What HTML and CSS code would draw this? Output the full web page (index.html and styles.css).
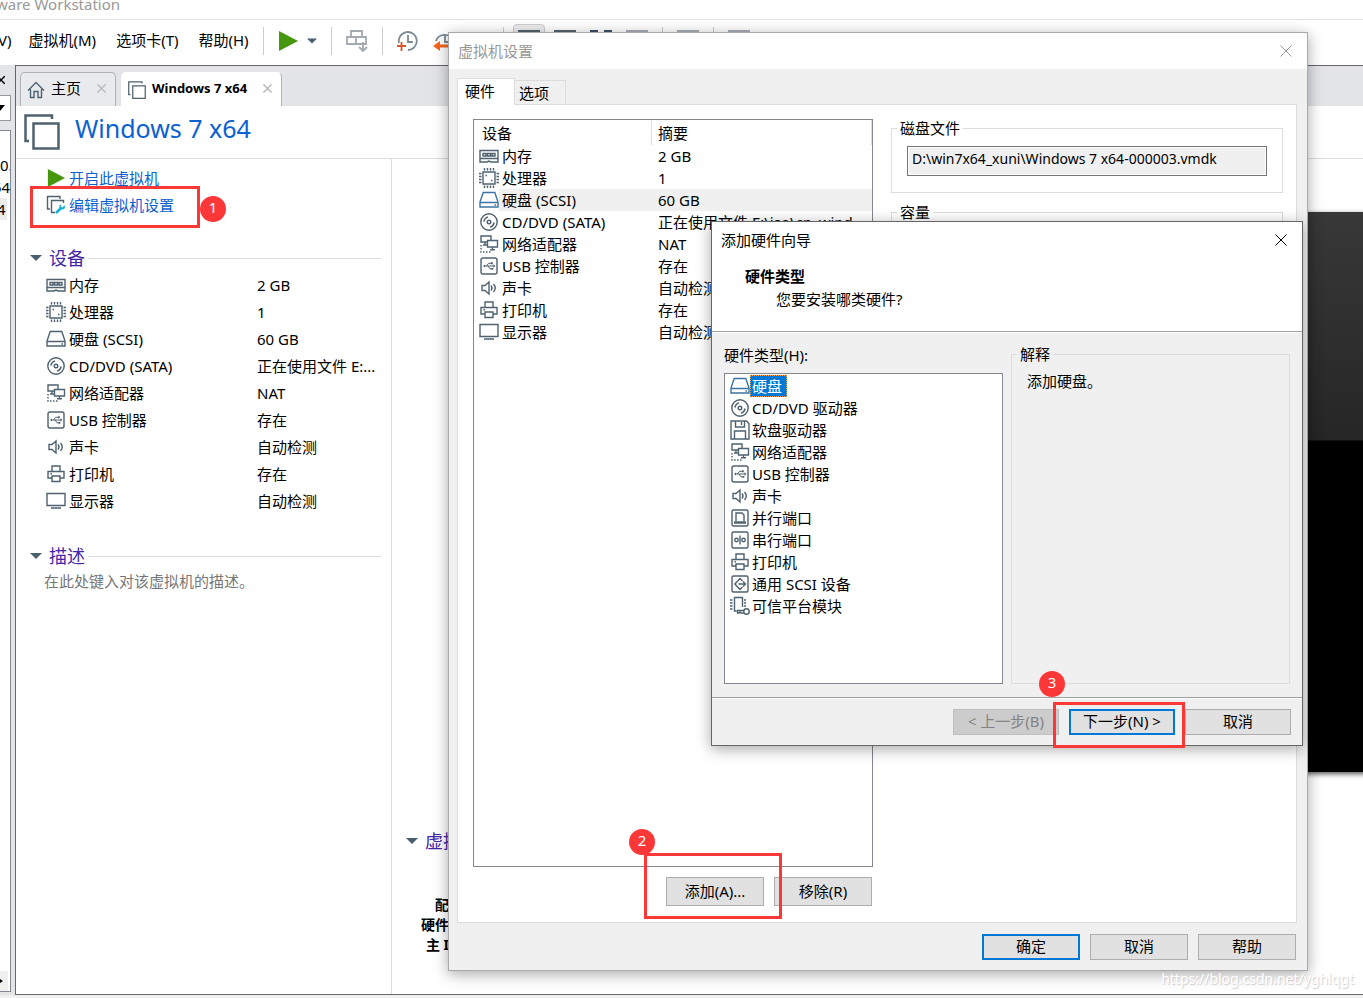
FILE: index.html
```html
<!DOCTYPE html>
<html lang="zh-CN">
<head>
<meta charset="utf-8">
<title>Workstation</title>
<link rel="stylesheet" href="styles.css">
</head>
<body>
<svg class="defs" aria-hidden="true">
  <symbol id="i-mem" viewBox="0 0 20 20"><path d="M1 4.500H19V16H12L10 15L8 16H1Z"/><path d="M1 12.500H19M4 7.500H7V10H4ZM8.500 7.500H11.500V10H8.500ZM13 7.500H16V10H13Z"/></symbol>
  <symbol id="i-cpu" viewBox="0 0 20 20"><path d="M4 4H16V16H4Z"/><path d="M5.500 0V2.500M8.500 0V2.500M11.500 0V2.500M14.500 0V2.500M5.500 17.500V20M8.500 17.500V20M11.500 17.500V20M14.500 17.500V20M0 5.500H2.500M0 8.500H2.500M0 11.500H2.500M0 14.500H2.500M17.500 5.500H20M17.500 8.500H20M17.500 11.500H20M17.500 14.500H20"/><path d="M6.500 7.500H8M12 12.500H13.500"/></symbol>
  <symbol id="i-disk" viewBox="0 0 20 20"><path d="M4.200 2.500H15.800L19 12V17H1V12Z"/><path d="M1 12.500H19M15.500 15H17"/></symbol>
  <symbol id="i-cd" viewBox="0 0 20 20"><circle cx="10" cy="10" r="8.200"/><circle cx="10" cy="10" r="1.800"/><path d="M4.800 9.500Q5.500 6 9 4.800M11 15.200Q14.500 14 15.200 10.500"/></symbol>
  <symbol id="i-net" viewBox="0 0 20 20"><path d="M12 6V2H2V8H8M6 8V11M4 11H8M8.500 6.500H18.500V13H8.500ZM13.500 13V15.500M11 15.700H16"/><path d="M2 11V18H13" stroke-dasharray="1.500 1.500"/></symbol>
  <symbol id="i-usb" viewBox="0 0 20 20"><rect x="2" y="2" width="16" height="16" rx="2"/><path stroke-width="1" d="M5 10H15M7.500 10L9.500 7.300H12M9 10L11 12.800H13"/><path stroke="none" fill="#4f6270" d="M4 10L6 8.500V11.500ZM14.500 8.300L16.500 10L14.500 11.700ZM12 6.300H13.800V8.200H12ZM12.500 11.900H14.300V13.800H12.500Z"/></symbol>
  <symbol id="i-snd" viewBox="0 0 20 20"><path d="M3 7.500H6L10 4V16L6 12.500H3ZM12 7.500Q14 10 12 12.500M14.500 6Q18 10 14.500 14"/></symbol>
  <symbol id="i-prn" viewBox="0 0 20 20"><path d="M6 7V2H14V7M6 14H2V7.500H18V14H14M6 12H14V17.500H6ZM4.500 9.700H6"/></symbol>
  <symbol id="i-mon" viewBox="0 0 20 20"><path d="M1 2.500H19V14.500H1ZM5 17H15"/></symbol>
  <symbol id="i-flp" viewBox="0 0 20 20"><path d="M1 1H16.500L19 3.500V19H1ZM5.500 1V7H14.500V1M11.500 2V5M4.500 19V11H15.500V19"/></symbol>
  <symbol id="i-par" viewBox="0 0 20 20"><rect x="2" y="2" width="16" height="16" rx="1.500"/><path d="M6 13V5H12L14 7V13"/><path d="M4 14.500H16" stroke-width="2.500"/></symbol>
  <symbol id="i-ser" viewBox="0 0 20 20"><rect x="2" y="2" width="16" height="16" rx="1.500"/><circle cx="6.500" cy="10" r="1.700"/><circle cx="13.500" cy="10" r="1.700"/><path d="M10 5.500V14.500"/></symbol>
  <symbol id="i-scsi" viewBox="0 0 20 20"><rect x="2" y="2" width="16" height="16" rx="1.500"/><path d="M12.500 7L10 4.500L4.800 10L10 15.500L12.500 13M8.500 10H15M13 7.500L15.500 10L13 12.500"/></symbol>
  <symbol id="i-tpm" viewBox="0 0 20 20"><path d="M12.500 11V1.500H4.500V15H6.500M0 4H2.500M0 7H2.500M0 10H2.500M0 13H2.500M14 4H16M14 7H16M14 10H16M14 14.500H7.500V17H9L10 16L11 17H14"/><circle cx="16.500" cy="15.500" r="2.700"/></symbol>
  <symbol id="i-x" viewBox="0 0 12 12"><path d="M.5 .5L11.500 11.500M11.500 .5L.5 11.500"/></symbol>
  <symbol id="i-down" viewBox="0 0 12 6"><path d="M0 0H12L6 6Z"/></symbol>
  <symbol id="i-play" viewBox="0 0 20 20"><path d="M1 0L20 10L1 20Z"/></symbol>
  <symbol id="i-vm" viewBox="0 0 36 36"><path d="M5 27H1.500V1.500H28V5"/><path d="M9.500 9.500H34.500V34.500H9.500Z"/></symbol>
</svg>

<div class="app">
  <header class="titlebar">ware Workstation</header>
  <nav class="menubar">
    <button class="menu menu-cut">V)</button>
    <button class="menu">虚拟机(M)</button>
    <button class="menu">选项卡(T)</button>
    <button class="menu">帮助(H)</button>
    <span class="sep"></span>
    <button class="tool tool-play" aria-label="play"><svg class="play" width="20" height="22" preserveAspectRatio="none"><use href="#i-play"/></svg><svg class="down" width="10" height="6"><use href="#i-down"/></svg></button>
    <span class="sep"></span>
    <button class="tool" aria-label="send"><svg class="faded" width="22" height="22" viewBox="0 0 22 22"><path d="M5 6V1H16V6M1 7H20V14H1ZM10 7V14M17 12V20M13 17L17 21L21 17"/></svg></button>
    <span class="sep"></span>
    <button class="tool tool-snap" aria-label="snapshot"><svg class="clock" width="22" height="22" viewBox="0 0 22 22"><path d="M3 13A9 9 0 1 1 12 20M12 5V12H17"/><path class="orange" d="M1 16H10M5.500 12V21"/></svg></button>
    <button class="tool tool-back" aria-label="revert"><svg class="clock" width="22" height="22" viewBox="0 0 22 22"><path d="M3 11A9 9 0 0 1 20 11M12 5V12H17"/><path class="orange-fill" d="M0 16L7 11V14.500H22V17.500H7V21Z"/></svg></button>
    <span class="sep sep-view"></span>
    <button class="tool tool-on" aria-label="view"><i></i></button>
    <button class="tool tool-bar" aria-label="view"><i></i></button>
    <button class="tool tool-bar tool-corners" aria-label="fit"><i></i></button>
    <button class="tool tool-bar tool-light" aria-label="unity"><i></i></button>
    <span class="sep"></span>
    <button class="tool tool-bar tool-light" aria-label="console"><i></i></button>
    <span class="sep"></span>
    <button class="tool tool-bar tool-light" aria-label="console"><i></i></button>
  </nav>

  <div class="body">
    <aside class="side">
      <button class="side-x" aria-label="close"><svg width="5" height="8" viewBox="3 0 5 8"><path d="M0 0L8 8M8 0L0 8"/></svg></button>
      <button class="side-combo" aria-label="filter"><svg width="5" height="6" viewBox="5 0 5 6"><path d="M0 0H10L5 6Z"/></svg></button>
      <div class="side-tree">
        <span>0.</span><span class="back">54</span><span class="sel">4</span>
        <div class="side-scroll"><svg width="4" height="6" viewBox="0 0 4 6"><path d="M0 1L3 3L0 5Z"/></svg></div>
      </div>
    </aside>
    <main class="main">
      <div class="tabs">
        <div class="tab"><svg class="ico ico-home" width="18" height="18" viewBox="0 0 18 18"><path d="M1 9.500L9 1.500L17 9.500M3.500 8V16.500H7V10.500H11V16.500H14.500V8"/></svg><span class="tab-name">主页</span><button class="tab-x" aria-label="close"><svg width="9" height="9"><use href="#i-x"/></svg></button></div>
        <div class="tab tab-active"><svg class="ico ico-vm" width="18" height="18"><use href="#i-vm"/></svg><span class="tab-name">Windows 7 x64</span><button class="tab-x" aria-label="close"><svg width="9" height="9"><use href="#i-x"/></svg></button></div>
      </div>
      <div class="head"><svg class="ico ico-big" width="36" height="36"><use href="#i-vm"/></svg><h1>Windows 7 x64</h1></div>
      <div class="cols">
        <section class="left">
          <div class="actions">
            <a href="#"><svg class="play" width="20" height="18" preserveAspectRatio="none"><use href="#i-play"/></svg>开启此虚拟机</a>
            <a href="#"><svg class="ico" width="20" height="20" viewBox="0 0 20 20"><path d="M4 14H1.500V1.500H14V4M9 17.500H5.500V5.500H17.500V8"/><path class="cyan" d="M10 18L15 13"/><path class="cyan-thin" d="M18.500 10L16.500 12.500L14.500 11.500L15.500 9Q12.500 10 13.500 13Q16 16 19 13Z"/></svg>编辑虚拟机设置</a>
            <div class="mark mark-1"><b>1</b></div>
          </div>
          <h2><svg class="down" width="12" height="6"><use href="#i-down"/></svg>设备</h2>
          <table class="devs">
            <tr><th><svg class="ico"><use href="#i-mem"/></svg>内存</th><td>2 GB</td></tr>
            <tr><th><svg class="ico"><use href="#i-cpu"/></svg>处理器</th><td>1</td></tr>
            <tr><th><svg class="ico"><use href="#i-disk"/></svg>硬盘 (SCSI)</th><td>60 GB</td></tr>
            <tr><th><svg class="ico"><use href="#i-cd"/></svg>CD/DVD (SATA)</th><td>正在使用文件 E:...</td></tr>
            <tr><th><svg class="ico"><use href="#i-net"/></svg>网络适配器</th><td>NAT</td></tr>
            <tr><th><svg class="ico"><use href="#i-usb"/></svg>USB 控制器</th><td>存在</td></tr>
            <tr><th><svg class="ico"><use href="#i-snd"/></svg>声卡</th><td>自动检测</td></tr>
            <tr><th><svg class="ico"><use href="#i-prn"/></svg>打印机</th><td>存在</td></tr>
            <tr><th><svg class="ico"><use href="#i-mon"/></svg>显示器</th><td>自动检测</td></tr>
          </table>
          <h2><svg class="down" width="12" height="6"><use href="#i-down"/></svg>描述</h2>
          <p class="desc">在此处键入对该虚拟机的描述。</p>
        </section>
        <section class="right">
          <div class="screen"></div>
          <h2><svg class="down" width="12" height="6"><use href="#i-down"/></svg>虚拟</h2>
          <div class="details"><span>配</span><span>硬件</span><span>主 I</span></div>
        </section>
      </div>
    </main>
  </div>
  <footer class="status"></footer>
</div>

<section class="dlg settings" role="dialog" aria-label="虚拟机设置">
  <div class="dlg-title"><span>虚拟机设置</span><button class="dlg-x" aria-label="close"><svg width="12" height="12"><use href="#i-x"/></svg></button></div>
  <div class="dlg-tabs"><button class="on">硬件</button><button>选项</button></div>
  <div class="pane">
    <div class="pane-left">
      <div class="box">
        <table class="list">
          <thead><tr><th>设备</th><th>摘要</th></tr></thead>
          <tbody>
            <tr><td><svg class="ico"><use href="#i-mem"/></svg>内存</td><td>2 GB</td></tr>
            <tr><td><svg class="ico"><use href="#i-cpu"/></svg>处理器</td><td>1</td></tr>
            <tr class="picked"><td><svg class="ico blue"><use href="#i-disk"/></svg>硬盘 (SCSI)</td><td>60 GB</td></tr>
            <tr><td><svg class="ico"><use href="#i-cd"/></svg>CD/DVD (SATA)</td><td>正在使用文件 E:\iso\cn_wind...</td></tr>
            <tr><td><svg class="ico"><use href="#i-net"/></svg>网络适配器</td><td>NAT</td></tr>
            <tr><td><svg class="ico"><use href="#i-usb"/></svg>USB 控制器</td><td>存在</td></tr>
            <tr><td><svg class="ico"><use href="#i-snd"/></svg>声卡</td><td>自动检测</td></tr>
            <tr><td><svg class="ico"><use href="#i-prn"/></svg>打印机</td><td>存在</td></tr>
            <tr><td><svg class="ico"><use href="#i-mon"/></svg>显示器</td><td>自动检测</td></tr>
          </tbody>
        </table>
      </div>
      <div class="row-btns">
        <div class="anchor"><button class="btn tall">添加(A)...</button><div class="mark mark-2"><b>2</b></div></div>
        <button class="btn tall">移除(R)</button>
      </div>
    </div>
    <div class="pane-right">
      <fieldset class="group"><legend>磁盘文件</legend><input class="path" aria-label="磁盘文件" readonly value="D:\win7x64_xuni\Windows 7 x64-000003.vmdk"></fieldset>
      <fieldset class="group"><legend>容量</legend></fieldset>
    </div>
  </div>
  <div class="dlg-foot"><button class="btn primary">确定</button><button class="btn">取消</button><button class="btn">帮助</button></div>
</section>

<section class="dlg wizard" role="dialog" aria-label="添加硬件向导">
  <div class="wiz-head">
    <div class="dlg-title"><span>添加硬件向导</span><button class="dlg-x" aria-label="close"><svg width="12" height="12"><use href="#i-x"/></svg></button></div>
    <h3>硬件类型</h3>
    <p>您要安装哪类硬件?</p>
  </div>
  <div class="wiz-body">
    <div class="wiz-left">
      <div class="wiz-label" id="hw">硬件类型(H):</div>
      <ul class="box hw" role="listbox" aria-labelledby="hw">
        <li class="picked"><svg class="ico blue"><use href="#i-disk"/></svg><span>硬盘</span></li>
        <li><svg class="ico"><use href="#i-cd"/></svg><span>CD/DVD 驱动器</span></li>
        <li><svg class="ico"><use href="#i-flp"/></svg><span>软盘驱动器</span></li>
        <li><svg class="ico"><use href="#i-net"/></svg><span>网络适配器</span></li>
        <li><svg class="ico"><use href="#i-usb"/></svg><span>USB 控制器</span></li>
        <li><svg class="ico"><use href="#i-snd"/></svg><span>声卡</span></li>
        <li><svg class="ico"><use href="#i-par"/></svg><span>并行端口</span></li>
        <li><svg class="ico"><use href="#i-ser"/></svg><span>串行端口</span></li>
        <li><svg class="ico"><use href="#i-prn"/></svg><span>打印机</span></li>
        <li><svg class="ico"><use href="#i-scsi"/></svg><span>通用 SCSI 设备</span></li>
        <li><svg class="ico"><use href="#i-tpm"/></svg><span>可信平台模块</span></li>
      </ul>
    </div>
    <fieldset class="group explain"><legend>解释</legend><p>添加硬盘。</p></fieldset>
  </div>
  <div class="wiz-foot">
    <button class="btn wide" disabled>&lt; 上一步(B)</button>
    <div class="anchor"><button class="btn wide primary">下一步(N) &gt;</button><div class="mark mark-3"><b>3</b></div></div>
    <button class="btn wide">取消</button>
  </div>
</section>
<div class="watermark">https://blog.csdn.net/yghlqgt</div>
</body>
</html>
```

FILE: styles.css
```css
* { box-sizing: border-box; }
html, body { height: 100%; }
body {
  margin: 0;
  overflow: hidden;
  position: relative;
  background: #fff;
  color: #000;
  font: 15px/22px "Noto Sans", "Noto Sans CJK SC", sans-serif;
}
button, input { font: inherit; color: inherit; margin: 0; padding: 0; border: 0; background: none; }
h1, h2, h3, p, ul, fieldset { margin: 0; padding: 0; font-weight: 400; }
ul { list-style: none; }
table { border-collapse: collapse; table-layout: fixed; width: 100%; }
th, td { padding: 0; font-weight: 400; text-align: left; white-space: nowrap; overflow: hidden; }
svg { flex: none; display: block; }
.defs { position: absolute; width: 0; height: 0; }
.ico { width: 20px; height: 20px; fill: none; stroke: #4f6270; stroke-width: 1.4; }
.ico.blue { stroke: #3c75a3; }
.ico-home { width: 18px; height: 18px; }
.play { fill: #46960f; }
.down { fill: #4a5f6d; }

/* main window */
.app { height: 100%; display: flex; flex-direction: column; }
.titlebar { height: 20px; flex: none; border-bottom: 1px solid #e3e3e3; color: #999; line-height: 8px; text-indent: -4px; }
.menubar { height: 45px; flex: none; display: flex; align-items: center; padding-bottom: 4px; white-space: nowrap; overflow: hidden; }
.menu { margin-right: 20px; padding-bottom: 2px; }
.menu-cut { margin-left: -2px; margin-right: 17px; }
.sep { width: 1px; height: 28px; background: #ccc; margin: 0 14px; flex: none; }
.menu + .sep { margin: 0 14px 0 -6px; }
.tool { display: flex; align-items: center; gap: 9px; flex: none; }
.tool-snap { margin: 0 15px 0 -1px; }
.faded { fill: none; stroke: #a3abb0; stroke-width: 1.800; }
.clock { fill: none; stroke: #7b8a94; stroke-width: 1.800; }
.orange { stroke: #d9572a; }
.orange-fill { fill: #f8641e; stroke: none; }
.sep-view { margin: 0 9px 0 48px; }
.tool-on { width: 32px; height: 34px; border: 1px solid #ccc; border-radius: 4px; background: #ececee; }
.tool-on i, .tool-bar i { display: block; width: 22px; height: 22px; border: 3px solid #56636d; margin: auto; }
.tool-bar { margin-left: 14px; }
.tool-on + .tool-bar { margin-left: 9px; }
.sep + .tool-bar { margin-left: 0; }
.tool-light i { border-color: #a8afb4; }
.tool-corners i { background: linear-gradient(#fff, #fff) center / 8px 22px no-repeat border-box; border-image: linear-gradient(90deg, #3f4e63 35%, #fff 35%, #fff 65%, #3f4e63 65%) 3; }

.body { flex: 1; min-height: 0; display: flex; background: #e2e4e7; }
.side { width: 15px; flex: none; display: flex; flex-direction: column; align-items: flex-start; padding-bottom: 3px; }
.side-x { height: 30px; }
.side-x svg { stroke: #000; stroke-width: 1.500; }
.side-combo { width: 11px; height: 26px; background: #fff; border: 1px solid #999; border-left: 0; overflow: hidden; }
.side-tree { margin-top: 9px; flex: 1; width: 11px; background: #fff; border: 1px solid #828790; border-left: 0; display: flex; flex-direction: column; padding-top: 23px; line-height: 22px; overflow: hidden; }
.side-tree .back { margin-left: -7px; }
.side-tree .sel { background: #ececec; margin-right: 3px; text-indent: -3px; }
.side-scroll { margin: auto 2px 0 0; height: 20px; background: #f0f0f0; display: flex; align-items: center; }
.main { flex: 1; min-width: 0; display: flex; flex-direction: column; background: #fff; border: solid #666; border-width: 1px 0 1px 1px; }
.tabs { height: 40px; flex: none; background: #e2e4e7; display: flex; align-items: flex-end; gap: 5px; padding-left: 4px; }
.tab { height: 34px; width: 96px; display: flex; align-items: center; padding: 0 9px 0 6px; border: 1px solid #b0b2b5; border-bottom: 0; border-radius: 5px 5px 0 0; background: #e9eaed; white-space: nowrap; }
.tab-name { margin-left: 6px; padding-bottom: 3px; }
.tab-active { width: 161px; background: #fff; border-left-color: #fff; border-top-color: #fff; }
.tab-active .tab-name { font-size: 13px; font-weight: 700; }
.ico-vm { stroke-width: 2.500; width: 18px; height: 18px; }
.tab-x { margin-left: auto; padding-bottom: 2px; }
.tab-x svg { stroke: #bbb; stroke-width: 2; }
.head { height: 53px; flex: none; display: flex; align-items: center; gap: 15px; padding: 0 8px; border-bottom: 1px solid #ddd; }
.ico-big { width: 36px; height: 36px; stroke-width: 2.500; }
.head h1 { font-size: 25px; line-height: 36px; color: #0a61d0; padding-bottom: 8px; }
.cols { flex: 1; min-height: 0; display: flex; }
.left { width: 376px; flex: none; border-right: 1px solid #ddd; padding: 5px 10px 0 14px; }
.actions { position: relative; padding-left: 16px; margin-bottom: 26px; }
.actions a { display: flex; align-items: center; gap: 3px; height: 27px; color: #0a61d0; text-decoration: none; }
.cyan { stroke: #12b0d6; stroke-width: 2.500; }
.cyan-thin { stroke: none; fill: #12b0d6; }
h2 { display: flex; align-items: center; gap: 7px; font-size: 18px; line-height: 28px; color: #4326a8; }
.left h2::after { content: ""; flex: 1; height: 1px; background: #ddd; margin-left: -4px; }
.devs { margin: -1px 0 28px; }
.devs th { width: 227px; padding-left: 16px; height: 27px; }
.devs th, .devs td { vertical-align: middle; }
.devs .ico, .list .ico { display: inline-block; vertical-align: top; margin: 1px 3px 0 0; }
.desc { color: #777; padding-left: 14px; line-height: 22px; }
.right { flex: 1; min-width: 0; position: relative; display: flex; flex-direction: column; padding: 53px 0 0 14px; }
.screen { width: 100%; height: 560px; background: linear-gradient(#383838, #262626 228px, #000 229px); box-shadow: 0 2px 5px #555; margin-left: 60px; }
.right h2 { margin-top: 55px; }
.details { display: grid; justify-items: end; width: 43px; margin-top: 40px; line-height: 20px; font-weight: 700; font-size: 14px; white-space: nowrap; }
.status { height: 3px; flex: none; background: #f0f0f0; }

/* dialogs */
.dlg { position: absolute; display: flex; flex-direction: column; background: #f0f0f0; border: 1px solid #aaa; box-shadow: 0 3px 14px rgba(0, 0, 0, .35); white-space: nowrap; }
.settings { top: 32px; right: 55px; bottom: 27px; left: 448px; }
.dlg-title { height: 36px; flex: none; display: flex; align-items: center; justify-content: space-between; padding: 0 15px 0 9px; background: #fff; }
.settings .dlg-title { color: #999; }
.dlg-x svg { stroke: currentColor; }
.dlg-tabs { height: 35px; flex: none; display: flex; align-items: flex-end; padding-left: 8px; }
.dlg-tabs button { width: 51px; height: 24px; border: 1px solid #dcdcdc; border-width: 1px 1px 0 0; padding-right: 12px; }
.dlg-tabs .on { width: 58px; height: 27px; background: #fff; border-left-width: 1px; margin-bottom: -1px; position: relative; padding: 0 12px 2px 0; }
.pane { flex: 1; min-height: 0; display: flex; gap: 18px; margin: 0 10px 0 8px; padding: 14px 13px 16px 15px; background: #fff; border: 1px solid #dcdcdc; }
.pane-left { width: 400px; flex: none; display: flex; flex-direction: column; gap: 10px; }
.box { flex: 1; background: #fff; border: 1px solid #828790; }
.list th:first-child { width: 178px; }
.list th { height: 25px; padding-left: 8px; background: linear-gradient(#ddd, #ddd) right / 1px 100% no-repeat; }
.list td { height: 22px; padding-left: 5px; line-height: 22px; }
.list td + td, .list th + th { padding-left: 6px; }
.list tbody .picked { background: linear-gradient(90deg, #fff 25px, #f0f0f0 25px); }
.row-btns { display: flex; justify-content: flex-end; gap: 10px; padding-right: 1px; }
.btn { width: 98px; height: 26px; padding-bottom: 2px; line-height: 20px; background: #e1e1e1; border: 1px solid #adadad; white-space: nowrap; }
.btn.tall { height: 29px; }
.btn.wide { width: 106px; }
.btn.primary { border: 2px solid #0078d7; }
.btn:disabled { background: #ccc; border-color: #bfbfbf; color: #838383; }
.pane-right { flex: 1; min-width: 0; }
.group { border: 1px solid #dcdcdc; padding: 0 15px 16px; min-width: 0; }
.group legend { padding: 0 3px; margin-left: -10px; line-height: 18px; }
.group + .group { margin-top: 10px; height: 200px; }
.path { display: block; width: 100%; height: 30px; margin-top: 9px; padding: 0 4px 5px; font-size: 14px; background: #f0f0f0; border: 1px solid #767676; box-shadow: inset 0 0 0 1px #fff; }
.dlg-foot { flex: none; display: flex; justify-content: flex-end; gap: 10px; padding: 11px 11px 10px; }

.wizard { top: 221px; right: 60px; left: 711px; border-color: #666; }
.wiz-head { background: #fff; height: 110px; border-bottom: 1px solid #a0a0a0; flex: none; }
.wiz-head h3 { font-size: 15px; font-weight: 700; padding-left: 33px; margin-top: 7px; }
.wiz-head p { padding-left: 64px; margin-top: 1px; }
.wiz-body { display: flex; gap: 8px; height: 366px; padding: 12px 12px 13px; border-top: 1px solid #fff; border-bottom: 1px solid #a0a0a0; }
.wiz-left { width: 279px; flex: none; display: flex; flex-direction: column; }
.wiz-label { height: 28px; line-height: 20px; }
.hw { padding: 1px 5px; }
.hw li { height: 22px; display: flex; align-items: center; }
.hw span { padding: 0 1px; border: 1px solid transparent; line-height: 20px; }
.hw .picked span { background: #0078d7; color: #fff; border: 1px dotted #f0a050; padding-right: 4px; }
.explain { flex: 1; }
.explain p { margin-top: 7px; }
.wiz-foot { display: flex; justify-content: flex-end; gap: 10px; padding: 10px 11px; border-top: 1px solid #fff; }

/* numbered callouts */
.anchor { position: relative; display: flex; }
.mark { position: absolute; border: 3px solid #fc3737; pointer-events: none; }
.mark b { position: absolute; width: 26px; height: 26px; border-radius: 50%; background: #fc3737; color: #fff; font-weight: 400; line-height: 23px; text-align: center; }
.mark-1 { left: 0; top: 22px; width: 170px; height: 42px; }
.mark-1 b { left: 167px; top: 7px; }
.mark-2 { left: -22px; top: -24px; width: 138px; height: 66px; }
.mark-2 b { left: -18px; top: -27px; }
.mark-3 { left: -16px; top: -7px; width: 132px; height: 46px; }
.mark-3 b { left: -17px; top: -34px; }
.watermark { position: absolute; right: 9px; bottom: 8px; font-size: 14px; color: #fff; text-shadow: 1px 1px 1px #ccc; }
```
